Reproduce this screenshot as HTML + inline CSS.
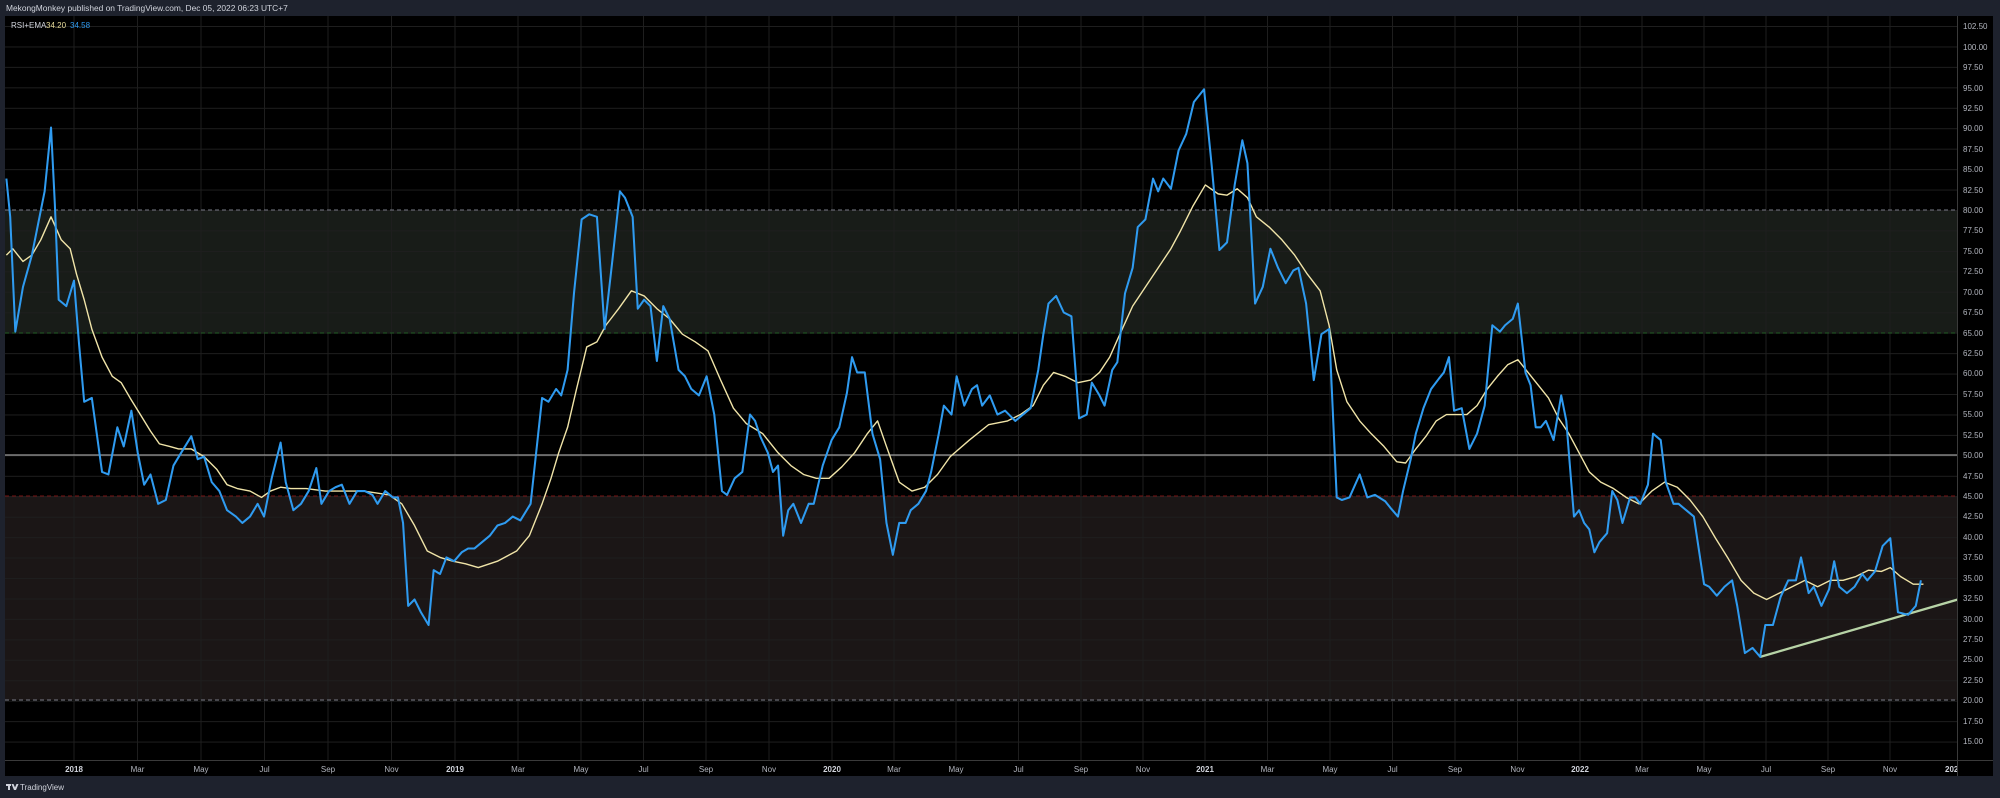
<!DOCTYPE html>
<html><head><meta charset="utf-8"><style>
html,body{margin:0;padding:0;background:#1e222d;width:2000px;height:798px;overflow:hidden}
svg{display:block}
text{font-family:"Liberation Sans",sans-serif}
</style></head><body>
<svg width="2000" height="798" viewBox="0 0 2000 798" xmlns="http://www.w3.org/2000/svg">
<defs>
<pattern id="hg" x="0" y="5.555" width="10" height="20.445" patternUnits="userSpaceOnUse">
<line x1="0" y1="0.5" x2="10" y2="0.5" stroke="#1e1e1e" stroke-width="1"/>
</pattern>
<clipPath id="cp"><rect x="5" y="16" width="1952" height="744"/></clipPath>
</defs>
<text x="6" y="11" font-size="8.4" fill="#d1d4dc">MekongMonkey published on TradingView.com, Dec 05, 2022 06:23 UTC+7</text>
<rect x="5" y="16" width="1988" height="760" fill="#000"/>
<rect x="5" y="210" width="1952" height="123" fill="#181c18"/>
<rect x="5" y="496" width="1952" height="204" fill="#1b1616"/>
<rect x="5" y="16" width="1952" height="744" fill="url(#hg)"/>
<g stroke="#1e1e1e" stroke-width="1">
<line x1="74" y1="16" x2="74" y2="760"/><line x1="137.5" y1="16" x2="137.5" y2="760"/><line x1="201" y1="16" x2="201" y2="760"/><line x1="264.5" y1="16" x2="264.5" y2="760"/><line x1="328" y1="16" x2="328" y2="760"/><line x1="391.5" y1="16" x2="391.5" y2="760"/>
<line x1="455" y1="16" x2="455" y2="760"/><line x1="518" y1="16" x2="518" y2="760"/><line x1="581" y1="16" x2="581" y2="760"/><line x1="643.5" y1="16" x2="643.5" y2="760"/><line x1="706" y1="16" x2="706" y2="760"/><line x1="769" y1="16" x2="769" y2="760"/>
<line x1="832" y1="16" x2="832" y2="760"/><line x1="894" y1="16" x2="894" y2="760"/><line x1="956" y1="16" x2="956" y2="760"/><line x1="1018.5" y1="16" x2="1018.5" y2="760"/><line x1="1081" y1="16" x2="1081" y2="760"/><line x1="1143" y1="16" x2="1143" y2="760"/>
<line x1="1205" y1="16" x2="1205" y2="760"/><line x1="1267.5" y1="16" x2="1267.5" y2="760"/><line x1="1330" y1="16" x2="1330" y2="760"/><line x1="1392.5" y1="16" x2="1392.5" y2="760"/><line x1="1455" y1="16" x2="1455" y2="760"/><line x1="1517.5" y1="16" x2="1517.5" y2="760"/>
<line x1="1580" y1="16" x2="1580" y2="760"/><line x1="1642" y1="16" x2="1642" y2="760"/><line x1="1704" y1="16" x2="1704" y2="760"/><line x1="1766" y1="16" x2="1766" y2="760"/><line x1="1828" y1="16" x2="1828" y2="760"/><line x1="1890" y1="16" x2="1890" y2="760"/>
</g>
<line x1="5" y1="210" x2="1957" y2="210" stroke="#787b86" stroke-dasharray="4,3"/>
<line x1="5" y1="333" x2="1957" y2="333" stroke="#1f5a22" stroke-dasharray="4,3"/>
<line x1="5" y1="496" x2="1957" y2="496" stroke="#7a1414" stroke-dasharray="4,3"/>
<line x1="5" y1="700" x2="1957" y2="700" stroke="#787b86" stroke-dasharray="4,3"/>
<line x1="5" y1="455" x2="1957" y2="455" stroke="#9a9a9a" stroke-width="1.3"/>
<g clip-path="url(#cp)"><g transform="scale(1.2755)" fill="none" stroke-linejoin="round">
<polyline stroke="#b7d3a6" stroke-width="1.8" points="1380,515 1535,470"/>
<polyline stroke="#f0e4a8" stroke-width="1.1" points="5,200 10,195 18,205 25,200 32,188 40,170 48,188 55,195 60,215 66,235 72,258 80,280 88,295 95,300 102,312 110,325 118,338 125,348 133,350 140,352 150,352 160,358 170,368 178,380 186,383 196,385 205,390 212,385 220,382 228,383 240,383 255,385 270,385 285,385 305,388 315,395 325,412 335,432 345,437 355,440 365,442 375,445 390,440 405,432 415,420 425,395 432,375 438,355 445,335 452,305 460,272 468,268 475,255 485,242 495,228 505,232 515,242 525,250 535,262 545,268 555,275 565,298 575,320 585,332 598,340 610,355 620,365 630,372 640,375 650,375 660,366 670,355 680,340 688,330 695,350 705,378 715,385 725,382 735,372 745,358 760,345 775,333 790,330 800,325 810,318 818,302 826,292 835,295 845,300 855,298 862,292 870,280 878,262 888,240 898,225 908,210 918,195 925,182 935,162 945,145 955,152 962,153 970,148 978,155 985,170 995,178 1005,188 1015,200 1025,215 1035,228 1042,255 1048,290 1056,315 1066,330 1075,340 1085,350 1095,362 1102,363 1110,352 1118,342 1126,330 1134,325 1142,325 1150,325 1158,318 1166,305 1174,295 1182,286 1190,282 1198,292 1206,302 1214,312 1222,328 1230,340 1238,355 1246,370 1255,378 1265,383 1275,390 1285,395 1295,385 1305,378 1315,382 1325,392 1335,405 1345,422 1355,438 1365,455 1375,465 1385,470 1395,465 1405,460 1415,455 1425,460 1435,455 1445,455 1455,452 1465,447 1475,448 1482,445 1490,452 1500,458 1508,458"/>
<polyline stroke="#2f9bf0" stroke-width="1.6" points="5,140 8,170 12,260 18,225 25,200 35,150 40,100 43,160 46,235 52,240 58,220 62,270 66,315 72,312 80,370 85,372 92,335 97,350 103,322 108,355 113,380 118,372 124,395 130,392 136,365 142,355 150,342 155,360 160,358 166,378 172,385 178,400 185,405 190,410 196,405 202,395 207,405 213,375 220,347 224,378 230,400 236,395 242,385 248,367 252,395 258,385 263,382 268,380 274,395 280,385 286,385 292,388 296,395 302,385 308,390 312,390 316,410 320,475 325,470 330,480 336,490 340,447 345,450 350,437 356,440 362,433 367,430 372,430 378,425 384,420 390,412 396,410 402,405 408,408 416,395 425,312 430,315 436,305 440,310 445,290 450,230 456,172 462,168 468,170 474,258 480,205 486,150 490,155 496,170 500,242 505,235 510,240 515,283 520,240 525,250 532,290 537,295 542,305 548,310 554,295 560,325 566,385 570,388 576,375 582,370 588,325 592,330 596,342 602,355 606,370 610,365 614,420 618,400 622,395 628,410 634,395 638,395 645,365 652,345 658,335 664,308 668,280 672,292 678,292 684,340 690,360 695,410 700,435 705,410 710,410 714,400 720,395 726,385 730,370 736,340 740,318 746,325 750,295 756,318 762,305 766,302 770,318 776,310 782,325 788,322 796,330 802,325 808,320 814,290 818,262 822,238 828,232 834,245 840,248 846,328 852,325 856,300 862,310 866,318 872,290 876,284 882,230 888,210 892,178 898,172 904,140 908,150 912,140 918,148 924,118 930,105 936,80 944,70 950,130 956,196 962,190 968,145 974,110 978,128 984,238 990,225 996,195 1002,210 1008,222 1014,212 1018,210 1024,238 1030,298 1036,262 1042,258 1048,390 1052,392 1058,390 1066,372 1072,390 1078,388 1086,393 1090,398 1096,405 1100,385 1106,360 1110,340 1116,320 1122,305 1128,297 1132,292 1136,280 1140,322 1146,320 1152,352 1158,340 1164,318 1170,255 1176,260 1180,255 1186,250 1190,238 1196,292 1200,302 1204,335 1208,335 1212,330 1218,345 1224,310 1228,330 1234,405 1238,400 1242,410 1246,415 1250,433 1254,425 1260,418 1264,385 1268,392 1272,410 1278,390 1282,390 1286,395 1292,380 1296,340 1302,345 1306,378 1312,395 1316,395 1322,400 1328,405 1336,458 1340,460 1346,467 1352,460 1358,455 1362,475 1368,512 1374,508 1380,515 1384,490 1390,490 1396,468 1402,455 1408,455 1412,437 1418,465 1422,460 1428,475 1434,462 1438,440 1442,460 1448,465 1454,460 1460,450 1464,455 1470,448 1476,428 1482,422 1488,480 1496,482 1502,475 1506,455"/>
</g></g>
<text x="11" y="28" font-size="8" fill="#d1d4dc">RSI+EMA</text>
<text x="46" y="28" font-size="8" fill="#e8dc9a">34.20</text>
<text x="70" y="28" font-size="8" fill="#2f9bf0">34.58</text>
<line x1="1957.5" y1="16" x2="1957.5" y2="776" stroke="#3a3a3a"/>
<line x1="5" y1="760.5" x2="1993" y2="760.5" stroke="#3a3a3a"/>
<g font-size="8" fill="#b2b5be">
<text x="1963" y="29">102.50</text><text x="1963" y="50">100.00</text><text x="1963" y="70">97.50</text><text x="1963" y="91">95.00</text><text x="1963" y="111">92.50</text><text x="1963" y="131">90.00</text><text x="1963" y="152">87.50</text><text x="1963" y="172">85.00</text><text x="1963" y="193">82.50</text><text x="1963" y="213">80.00</text><text x="1963" y="233">77.50</text><text x="1963" y="254">75.00</text><text x="1963" y="274">72.50</text><text x="1963" y="295">70.00</text><text x="1963" y="315">67.50</text><text x="1963" y="336">65.00</text><text x="1963" y="356">62.50</text><text x="1963" y="376">60.00</text><text x="1963" y="397">57.50</text><text x="1963" y="417">55.00</text><text x="1963" y="438">52.50</text><text x="1963" y="458">50.00</text><text x="1963" y="479">47.50</text><text x="1963" y="499">45.00</text><text x="1963" y="519">42.50</text><text x="1963" y="540">40.00</text><text x="1963" y="560">37.50</text><text x="1963" y="581">35.00</text><text x="1963" y="601">32.50</text><text x="1963" y="622">30.00</text><text x="1963" y="642">27.50</text><text x="1963" y="662">25.00</text><text x="1963" y="683">22.50</text><text x="1963" y="703">20.00</text><text x="1963" y="724">17.50</text><text x="1963" y="744">15.00</text>
</g>
<g font-size="8" fill="#b2b5be" text-anchor="middle">
<text x="74" y="772" font-weight="bold" fill="#d1d4dc">2018</text><text x="137.5" y="772">Mar</text><text x="201" y="772">May</text><text x="264.5" y="772">Jul</text><text x="328" y="772">Sep</text><text x="391.5" y="772">Nov</text>
<text x="455" y="772" font-weight="bold" fill="#d1d4dc">2019</text><text x="518" y="772">Mar</text><text x="581" y="772">May</text><text x="643.5" y="772">Jul</text><text x="706" y="772">Sep</text><text x="769" y="772">Nov</text>
<text x="832" y="772" font-weight="bold" fill="#d1d4dc">2020</text><text x="894" y="772">Mar</text><text x="956" y="772">May</text><text x="1018.5" y="772">Jul</text><text x="1081" y="772">Sep</text><text x="1143" y="772">Nov</text>
<text x="1205" y="772" font-weight="bold" fill="#d1d4dc">2021</text><text x="1267.5" y="772">Mar</text><text x="1330" y="772">May</text><text x="1392.5" y="772">Jul</text><text x="1455" y="772">Sep</text><text x="1517.5" y="772">Nov</text>
<text x="1580" y="772" font-weight="bold" fill="#d1d4dc">2022</text><text x="1642" y="772">Mar</text><text x="1704" y="772">May</text><text x="1766" y="772">Jul</text><text x="1828" y="772">Sep</text><text x="1890" y="772">Nov</text>
</g>
<rect x="1958" y="761" width="35" height="15" fill="#000"/>
<text x="1945" y="772" font-size="8" font-weight="bold" fill="#d1d4dc">202</text>
<line x1="1957.5" y1="761" x2="1957.5" y2="776" stroke="#3a3a3a"/>
<g fill="#d1d4dc"><rect x="6" y="784" width="5" height="2"/><rect x="8" y="784" width="2" height="6"/><polygon points="11.5,784 13.5,784 15,787.5 16.5,784 18.5,784 16,790 14,790"/></g>
<text x="20" y="790" font-size="8" fill="#d1d4dc">TradingView</text>
</svg>
</body></html>
